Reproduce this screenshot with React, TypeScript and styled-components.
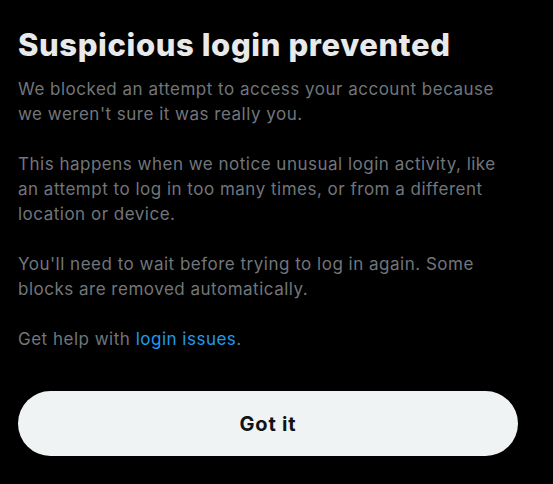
import React from "react";
import styled, { createGlobalStyle } from "styled-components";

const Global = createGlobalStyle`
  html, body { margin: 0; padding: 0; background: #000; }
  body { font-family: Inter, "Noto Sans", "Liberation Sans", sans-serif; }
`;

const Dialog = styled.div`
  width: 553px;
  height: 484px;
  box-sizing: border-box;
  background: #000;
  padding: 27px 35px 0 18px;
  display: flex;
  flex-direction: column;
`;

const Title = styled.h1`
  margin: 0;
  font-size: 31px;
  line-height: 36px;
  font-weight: 800;
  color: #e7e9ea;
  letter-spacing: 0.6px;
`;

const Body = styled.div`
  margin-top: 14px;
  display: flex;
  flex-direction: column;
  gap: 25px;
`;

const Paragraph = styled.p`
  margin: 0;
  font-size: 17px;
  line-height: 25px;
  font-weight: 400;
  color: #71767b;
  letter-spacing: 0.5px;
`;

const Link = styled.a`
  color: #1d9bf0;
  text-decoration: none;
`;

const Button = styled.button`
  margin-top: 39px;
  width: 500px;
  height: 65px;
  border: none;
  border-radius: 33px;
  background: #eff3f4;
  color: #0f1419;
  font-family: inherit;
  font-size: 20px;
  font-weight: 700;
  letter-spacing: 0.8px;
  cursor: pointer;
`;

export default function App() {
  return (
    <>
      <Global />
      <Dialog>
        <Title>Suspicious login prevented</Title>
        <Body>
          <Paragraph>
            We blocked an attempt to access your account because we weren't sure it was really you.
          </Paragraph>
          <Paragraph>
            This happens when we notice unusual login activity, like an attempt to log in too many times, or from a different location or device.
          </Paragraph>
          <Paragraph>
            You'll need to wait before trying to log in again. Some blocks are removed automatically.
          </Paragraph>
          <Paragraph>
            Get help with <Link href="#">login issues</Link>.
          </Paragraph>
        </Body>
        <Button>Got it</Button>
      </Dialog>
    </>
  );
}
